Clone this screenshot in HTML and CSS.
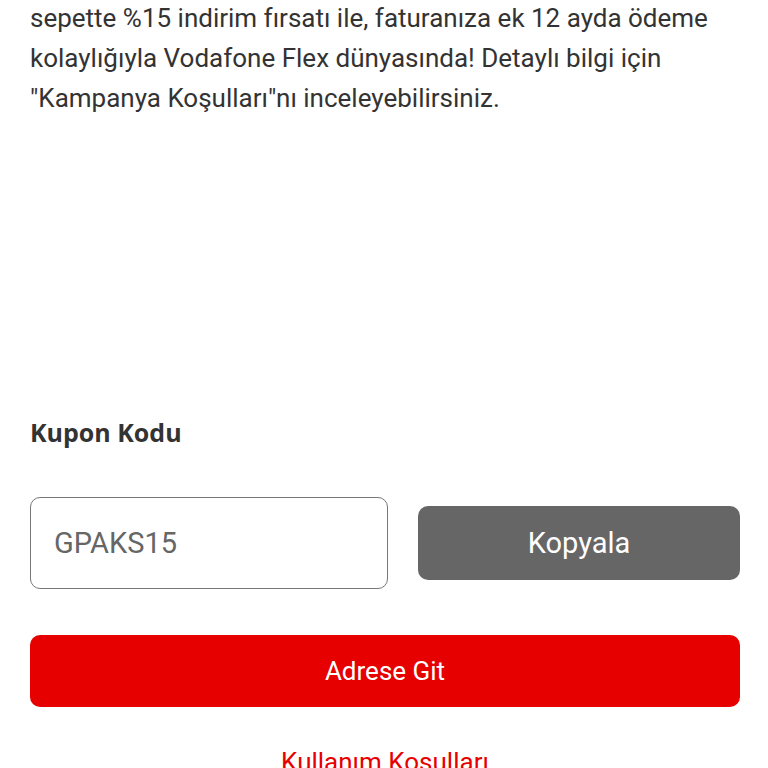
FILE: index.html
```html
<!DOCTYPE html>
<html lang="tr">
  <head>
    <meta charset="UTF-8" />
    <title>Kampanya Detayı</title>
    <link rel="stylesheet" href="styles.css">
  </head>
  <body>
    <div class="campaign">
      <p class="description">
        sepette %15 indirim fırsatı ile, faturanıza ek 12 ayda ödeme
        kolaylığıyla Vodafone Flex dünyasında! Detaylı bilgi için
        "Kampanya Koşulları"nı inceleyebilirsiniz.
      </p>

      <div class="coupon">
        <h2>Kupon Kodu</h2>
        <div class="coupon-row">
          <div class="coupon-code">GPAKS15</div>
          <button class="copy-button">Kopyala</button>
        </div>
      </div>

      <button class="go-button">Adrese Git</button>
      <a class="terms" href="#">Kullanım Koşulları</a>
    </div>
  </body>
</html>
```

FILE: styles.css
```css
body {
  margin: 0;
  font-family: Roboto, "Liberation Sans", sans-serif;
  background-color: #ffffff;
  color: #333333;
  overflow: hidden;
}

.campaign {
  display: flex;
  flex-direction: column;
  padding: 0 28px 0 30px;
}

.description {
  margin: -2px 0 0;
  font-size: 26px;
  line-height: 40px;
  color: #333333;
}

.coupon {
  margin-top: 297px;
}

.coupon h2 {
  margin: 0;
  font-family: "Open Sans", sans-serif;
  font-size: 25px;
  font-weight: 700;
  color: #333333;
}

.coupon-row {
  display: flex;
  align-items: center;
  gap: 30px;
  margin-top: 48px;
}

.coupon-code {
  flex: 0 0 358px;
  box-sizing: border-box;
  height: 92px;
  display: flex;
  align-items: center;
  padding-left: 23px;
  border: 1px solid #777777;
  border-radius: 10px;
  font-size: 29px;
  color: #666666;
}

.copy-button {
  flex: 1;
  height: 74px;
  border: none;
  border-radius: 10px;
  background-color: #666666;
  color: #ffffff;
  font-family: inherit;
  font-size: 29px;
}

.go-button {
  margin-top: 46px;
  height: 72px;
  border: none;
  border-radius: 10px;
  background-color: #e60000;
  color: #ffffff;
  font-family: inherit;
  font-size: 26px;
}

.terms {
  margin-top: 40px;
  text-align: center;
  font-size: 26px;
  color: #e60000;
  text-decoration: none;
}
```
